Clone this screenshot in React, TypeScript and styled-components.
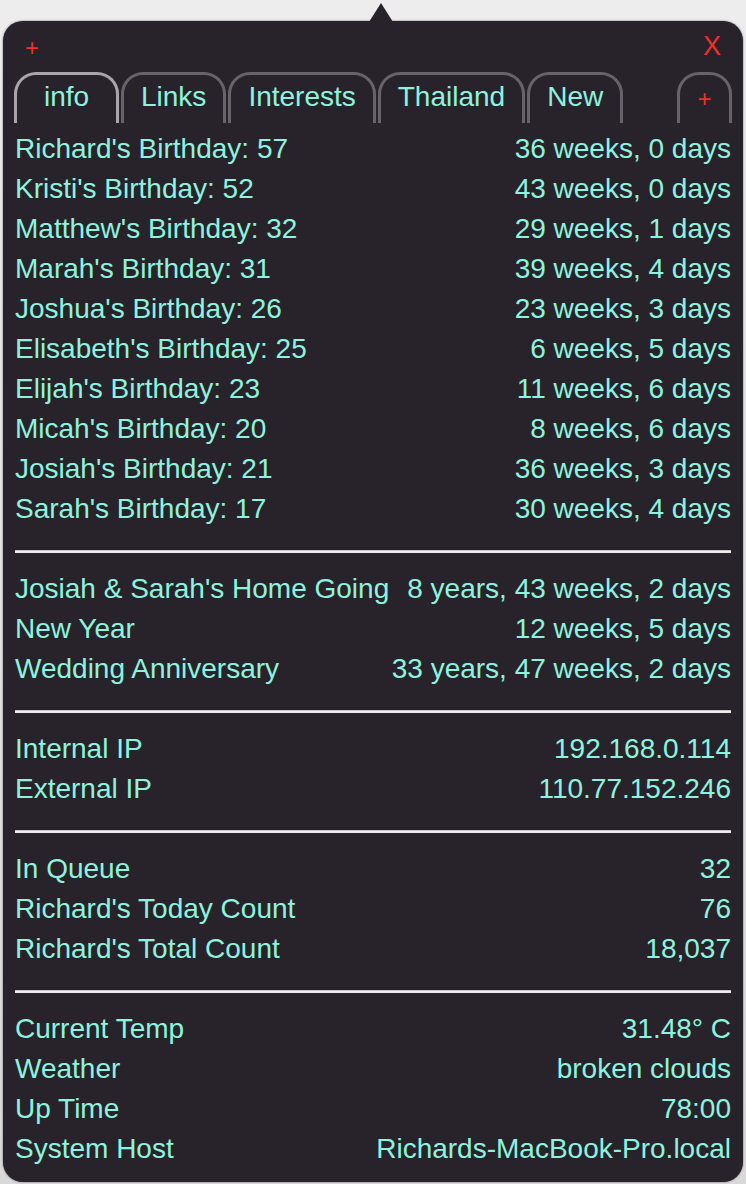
import React from 'react'
import styled, { createGlobalStyle } from 'styled-components'

const GlobalStyle = createGlobalStyle`
  html, body {
    margin: 0;
    padding: 0;
    background: linear-gradient(#ededed, #d9d9d9);
    font-family: "Liberation Sans", Arial, Helvetica, sans-serif;
  }
`

const Page = styled.div`
  width: 746px;
  height: 1184px;
  box-sizing: border-box;
  padding: 21px 3px 2px 3px;
`

const Popover = styled.div`
  position: relative;
  height: 100%;
  box-sizing: border-box;
  background: #28232a;
  border-radius: 20px;
  padding: 0 12px 13px 12px;
  box-shadow: 0 0 2px rgba(0, 0, 0, 0.6);
`

const Arrow = styled.div`
  position: absolute;
  top: -18px;
  left: 366px;
  width: 0;
  height: 0;
  border-left: 12px solid transparent;
  border-right: 12px solid transparent;
  border-bottom: 19px solid #28232a;
`

const Header = styled.div`
  height: 51px;
  display: flex;
  align-items: center;
  justify-content: space-between;
  padding: 0 10px 0 10px;
  color: #ee3124;
`

const AddButton = styled.span`
  font-size: 24px;
  line-height: 1;
  margin-top: 2px;
`

const CloseButton = styled.span`
  font-size: 27px;
  line-height: 1;
`

const TabBar = styled.div`
  display: flex;
  gap: 2px;
  height: 51px;
  margin-left: -1px;
  margin-bottom: 6px;
`

const Tab = styled.div<{ $active?: boolean }>`
  box-sizing: border-box;
  min-width: ${p => (p.$active ? '105px' : '0')};
  height: 51px;
  padding: 0 17px 4px;
  display: flex;
  align-items: center;
  justify-content: center;
  border: 3px solid ${p => (p.$active ? '#aaa5aa' : '#68636a')};
  border-bottom: none;
  border-radius: 22px 22px 0 0;
  color: #8ef3de;
  font-size: 28px;
`

const PlusTab = styled(Tab)`
  width: 55px;
  padding: 0;
  margin-left: auto;
  margin-right: -1px;
  color: #ee3124;
  font-size: 24px;
`

const Row = styled.div`
  height: 40px;
  display: flex;
  align-items: center;
  justify-content: space-between;
  color: #8ef3de;
  font-size: 28px;
  white-space: nowrap;
`

const Divider = styled.div`
  height: 40px;
  box-sizing: border-box;
  padding-top: 21px;

  &::before {
    content: '';
    display: block;
    height: 3px;
    background: linear-gradient(#9b989b, #f2f2f2 35%, #e6e6e6);
  }
`

type Item = [string, string]

const sections: Item[][] = [
  [
    ["Richard's Birthday: 57", '36 weeks, 0 days'],
    ["Kristi's Birthday: 52", '43 weeks, 0 days'],
    ["Matthew's Birthday: 32", '29 weeks, 1 days'],
    ["Marah's Birthday: 31", '39 weeks, 4 days'],
    ["Joshua's Birthday: 26", '23 weeks, 3 days'],
    ["Elisabeth's Birthday: 25", '6 weeks, 5 days'],
    ["Elijah's Birthday: 23", '11 weeks, 6 days'],
    ["Micah's Birthday: 20", '8 weeks, 6 days'],
    ["Josiah's Birthday: 21", '36 weeks, 3 days'],
    ["Sarah's Birthday: 17", '30 weeks, 4 days'],
  ],
  [
    ["Josiah & Sarah's Home Going", '8 years, 43 weeks, 2 days'],
    ['New Year', '12 weeks, 5 days'],
    ['Wedding Anniversary', '33 years, 47 weeks, 2 days'],
  ],
  [
    ['Internal IP', '192.168.0.114'],
    ['External IP', '110.77.152.246'],
  ],
  [
    ['In Queue', '32'],
    ["Richard's Today Count", '76'],
    ["Richard's Total Count", '18,037'],
  ],
  [
    ['Current Temp', '31.48° C'],
    ['Weather', 'broken clouds'],
    ['Up Time', '78:00'],
    ['System Host', 'Richards-MacBook-Pro.local'],
  ],
]

const tabs = ['info', 'Links', 'Interests', 'Thailand', 'New']

const App: React.FC = () => (
  <Page>
    <GlobalStyle />
    <Popover>
      <Arrow />
      <Header>
        <AddButton>+</AddButton>
        <CloseButton>X</CloseButton>
      </Header>
      <TabBar>
        {tabs.map((t, i) => (
          <Tab key={t} $active={i === 0}>{t}</Tab>
        ))}
        <PlusTab>+</PlusTab>
      </TabBar>
      {sections.map((rows, si) => (
        <React.Fragment key={si}>
          {si > 0 && <Divider />}
          {rows.map(([label, value]) => (
            <Row key={label}>
              <span>{label}</span>
              <span>{value}</span>
            </Row>
          ))}
        </React.Fragment>
      ))}
    </Popover>
  </Page>
)

export default App
